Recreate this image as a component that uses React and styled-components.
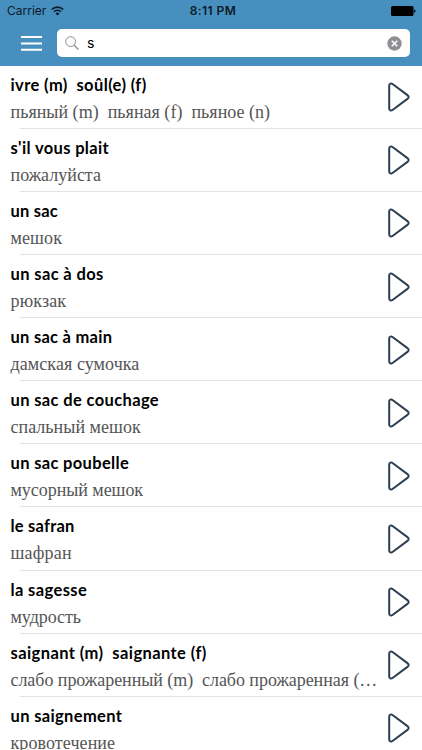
import React from 'react';
import styled, { createGlobalStyle } from 'styled-components';

const GlobalStyle = createGlobalStyle`
  * {
    box-sizing: border-box;
  }
  body {
    margin: 0;
    background: #fff;
  }
`;
const Screen = styled.div`
  width: 422px;
  height: 750px;
  overflow: hidden;
  display: flex;
  flex-direction: column;
  background: #fff;
`;
const Header = styled.header`
  flex: 0 0 65.6px;
  background: #468fbf;
`;
const StatusBar = styled.div`
  height: 22px;
  display: grid;
  grid-template-columns: 1fr auto 1fr;
  align-items: center;
  padding: 0 6px 0 7px;
  font-family: Inter, 'Liberation Sans', sans-serif;
  font-size: 12px;
  line-height: 22px;
  color: #0b1a26;
`;
const Carrier = styled.div`
  display: flex;
  align-items: center;
  gap: 5px;
`;
const Clock = styled.div`
  font-weight: 600;
  letter-spacing: 0.45px;
  padding-left: 3px;
`;
const Battery = styled.svg`
  justify-self: end;
`;
const Toolbar = styled.div`
  display: flex;
  align-items: center;
  padding: 7px 12px 0 21px;
`;
const MenuButton = styled.button`
  display: flex;
  width: 36px;
  padding: 0;
  border: 0;
  background: none;
  cursor: pointer;
`;
const SearchField = styled.label`
  flex: 1;
  display: flex;
  align-items: center;
  height: 28px;
  padding: 0 8px;
  border-radius: 5px;
  background: #fff;
`;
const SearchInput = styled.input`
  flex: 1;
  min-width: 0;
  height: 18px;
  margin: 0 0 2px 8px;
  padding: 0;
  border: 0;
  outline: none;
  background: none;
  font-family: Inter, 'Liberation Sans', sans-serif;
  font-size: 14px;
  color: #000;
`;
const List = styled.ul`
  margin: 0;
  padding: 0;
  list-style: none;
`;
const Row = styled.li`
  display: flex;
  justify-content: space-between;
  height: 63.13px;
  padding: 0 12px 0 10.5px;
  background: linear-gradient(#e3e3e5, #e3e3e5) 20px 100% / 100% 1px no-repeat;
`;
const Words = styled.div`
  width: 367px;
  min-width: 0;
`;
const Title = styled.div`
  padding-top: 8px;
  font-family: Lato, sans-serif;
  font-weight: 700;
  font-size: 16.5px;
  line-height: 22px;
  letter-spacing: ${({ $spacing }) => $spacing || 0}px;
  white-space: pre;
  color: #000;
`;
const Translation = styled.div`
  padding-top: 5px;
  font-family: 'Liberation Serif', serif;
  font-size: 18px;
  line-height: 23px;
  letter-spacing: ${({ $spacing }) => $spacing || 0}px;
  white-space: pre;
  color: #555;
`;
const PlayButton = styled.button`
  display: flex;
  align-items: center;
  padding: 0;
  border: 0;
  background: none;
  cursor: pointer;
`;

const words = [
  {
    fr: 'ivre (m)  soûl(e) (f)',
    frSpacing: 0.38,
    ru: 'пьяный (m)  пьяная (f)  пьяное (n)',
    ruSpacing: 0.02,
  },
  { fr: "s'il vous plait", frSpacing: 0.35, ru: 'пожалуйста' },
  { fr: 'un sac', frSpacing: 0.2, ru: 'мешок', ruSpacing: 0.1 },
  { fr: 'un sac à dos', frSpacing: 0.38, ru: 'рюкзак', ruSpacing: 0.15 },
  { fr: 'un sac à main', frSpacing: 0.27, ru: 'дамская сумочка', ruSpacing: 0.08 },
  { fr: 'un sac de couchage', frSpacing: 0.36, ru: 'спальный мешок', ruSpacing: 0.03 },
  { fr: 'un sac poubelle', frSpacing: 0.34, ru: 'мусорный мешок', ruSpacing: -0.05 },
  { fr: 'le safran', frSpacing: 0.22, ru: 'шафран', ruSpacing: 0.2 },
  { fr: 'la sagesse', frSpacing: 0.38, ru: 'мудрость', ruSpacing: -0.05 },
  {
    fr: 'saignant (m)  saignante (f)',
    frSpacing: 0.41,
    ru: 'слабо прожаренный (m)  слабо прожаренная (…',
    ruSpacing: -0.05,
  },
  { fr: 'un saignement', frSpacing: 0.35, ru: 'кровотечение', ruSpacing: 0.09 },
];

const WifiIcon = () => (
  <svg width="13" height="10" viewBox="0 0 13 10" fill="none" stroke="#0b1a26">
    <path d="M0.8 3.5a8.2 8.2 0 0 1 11.4 0" strokeWidth="1.7" />
    <path d="M2.9 5.8a5.1 5.1 0 0 1 7.2 0" strokeWidth="1.6" />
    <path d="M6.5 9.4L4.5 7.4a2.9 2.9 0 0 1 4 0z" fill="#0b1a26" stroke="none" />
  </svg>
);

const PlayIcon = () => (
  <svg width="22" height="30" viewBox="0 0 22 30" fill="none">
    <path
      d="M1.2 3.4v23.2c0 1.9 1.9 2.4 3.3 1.4l15.3-11.4c1.1-.9 1.1-2.3 0-3.2L4.5 2C3.1 1 1.2 1.5 1.2 3.4z"
      stroke="#2c3e50"
      strokeWidth="2"
      strokeLinejoin="round"
    />
  </svg>
);

const App = () => (
  <Screen>
    <GlobalStyle />
    <Header>
      <StatusBar>
        <Carrier>
          Carrier
          <WifiIcon />
        </Carrier>
        <Clock>8:11 PM</Clock>
        <Battery width="25" height="10" viewBox="0 0 25 10">
          <rect width="22.5" height="10" rx="1.5" fill="#000" />
          <path d="M23.2 3.2c1.8.5 1.8 3.1 0 3.6z" fill="#000" />
        </Battery>
      </StatusBar>
      <Toolbar>
        <MenuButton aria-label="Menu">
          <svg width="21" height="15" viewBox="0 0 21 15" stroke="#fff" strokeWidth="2">
            <path d="M0 1h21M0 7.4h21M0 13.8h21" />
          </svg>
        </MenuButton>
        <SearchField>
          <svg width="14" height="14" viewBox="0 0 14 14" fill="none" stroke="#8e8e93">
            <circle cx="5.6" cy="5.6" r="4.9" />
            <path d="M9.2 9.2l4.2 4.2" strokeWidth="1.4" />
          </svg>
          <SearchInput defaultValue="s" aria-label="Search" />
          <svg width="15" height="15" viewBox="0 0 15 15">
            <circle cx="7.5" cy="7.5" r="7.2" fill="#8e8e93" />
            <path d="M4.8 4.8l5.4 5.4M10.2 4.8l-5.4 5.4" stroke="#fff" strokeWidth="1.6" />
          </svg>
        </SearchField>
      </Toolbar>
    </Header>
    <List>
      {words.map(word => (
        <Row key={word.fr}>
          <Words>
            <Title $spacing={word.frSpacing}>{word.fr}</Title>
            <Translation $spacing={word.ruSpacing}>{word.ru}</Translation>
          </Words>
          <PlayButton aria-label="Play">
            <PlayIcon />
          </PlayButton>
        </Row>
      ))}
    </List>
  </Screen>
);

export default App;
